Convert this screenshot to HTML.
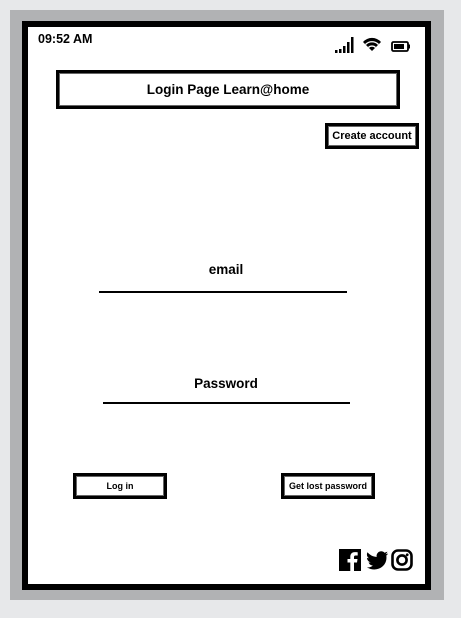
<!DOCTYPE html>
<html><head><style>
body{margin:0;width:461px;height:618px;background:#e7e8ea;position:relative;overflow:hidden;font-family:"Liberation Sans",sans-serif;font-weight:bold;color:#000}
.a{position:absolute;box-sizing:border-box}
.btn{border:3px solid #000;box-shadow:inset 0 0 0 1px #666;display:flex;align-items:center;justify-content:center;background:#fff}
</style></head><body>
<div class="a" style="left:10px;top:10px;width:434px;height:590px;background:#b1b2b4"></div>
<div class="a" style="left:22px;top:21px;width:409px;height:569px;background:#fff;border:6px solid #000"></div>
<div class="a" style="left:38px;top:32px;font-size:12.5px">09:52 AM</div>
<svg class="a" style="left:335px;top:36px" width="78" height="18" viewBox="0 0 78 18">
<rect x="0" y="14" width="2.5" height="3"/><rect x="4" y="13" width="2.5" height="4"/><rect x="8" y="10" width="2.5" height="7"/><rect x="12" y="6" width="2.5" height="11"/><rect x="16" y="1" width="2.5" height="16"/>
<path d="M28 6 A12 12 0 0 1 46 6 L37 15Z"/><path d="M30.5 8.5 A9 9 0 0 1 43.5 8.5" fill="none" stroke="#fff" stroke-width="1.3"/><path d="M33.5 11.5 A5 5 0 0 1 40.5 11.5" fill="none" stroke="#fff" stroke-width="1.3"/>
<rect x="57" y="6" width="16" height="9" rx="1.5" fill="none" stroke="#000" stroke-width="1.8"/><rect x="59" y="8" width="10" height="5"/><rect x="73.5" y="8.5" width="1.5" height="4"/>
</svg>
<div class="a btn" style="left:56px;top:70px;width:344px;height:39px;font-size:13.5px">Login Page Learn@home</div>
<div class="a btn" style="left:325px;top:123px;width:94px;height:26px;font-size:11px">Create account</div>
<div class="a" style="left:0;width:452px;top:262px;text-align:center;font-size:13.5px">email</div>
<div class="a" style="left:99px;top:291px;width:248px;height:2px;background:#000"></div>
<div class="a" style="left:0;width:452px;top:376px;text-align:center;font-size:13.5px">Password</div>
<div class="a" style="left:103px;top:402px;width:247px;height:2px;background:#000"></div>
<div class="a btn" style="left:73px;top:473px;width:94px;height:26px;font-size:9px">Log in</div>
<div class="a btn" style="left:281px;top:473px;width:94px;height:26px;font-size:9px">Get lost password</div>
<svg class="a" style="left:339px;top:549px" width="75" height="23" viewBox="0 0 75 23">
<path d="M0 0H22V22H15V13.5H18L18.5 10H15V8C15 7 15.5 6.5 16.5 6.5H18.7V3.3C18 3.2 17 3.1 15.8 3.1C13 3.1 11.3 4.8 11.3 7.8V10H8.5V13.5H11.3V22H0Z"/>
<path d="M49 4.5C48.2 4.9 47.3 5.1 46.4 5.2C47.4 4.6 48.1 3.7 48.4 2.6C47.5 3.1 46.5 3.5 45.5 3.7C43.7 1.8 40.7 1.9 38.9 3.7C37.8 4.8 37.3 6.4 37.7 8C34.1 7.8 30.8 6.1 28.5 3.3C27.3 5.4 28 8 30 9.3C29.3 9.3 28.6 9.1 28 8.8C28 11 29.5 12.9 31.7 13.3C31 13.5 30.3 13.5 29.6 13.4C30.2 15.3 31.9 16.5 33.9 16.6C32.2 17.9 30.1 18.6 27.9 18.4C37.5 24 49 17.6 47.3 6.5C48.1 6 48.7 5.3 49 4.5Z"/>
<rect x="53.5" y="1.5" width="19" height="19" rx="5.5" fill="none" stroke="#000" stroke-width="2.6"/><circle cx="63" cy="11" r="4.6" fill="none" stroke="#000" stroke-width="2.6"/><circle cx="68.2" cy="5.8" r="1.4"/>
</svg>
</body></html>
